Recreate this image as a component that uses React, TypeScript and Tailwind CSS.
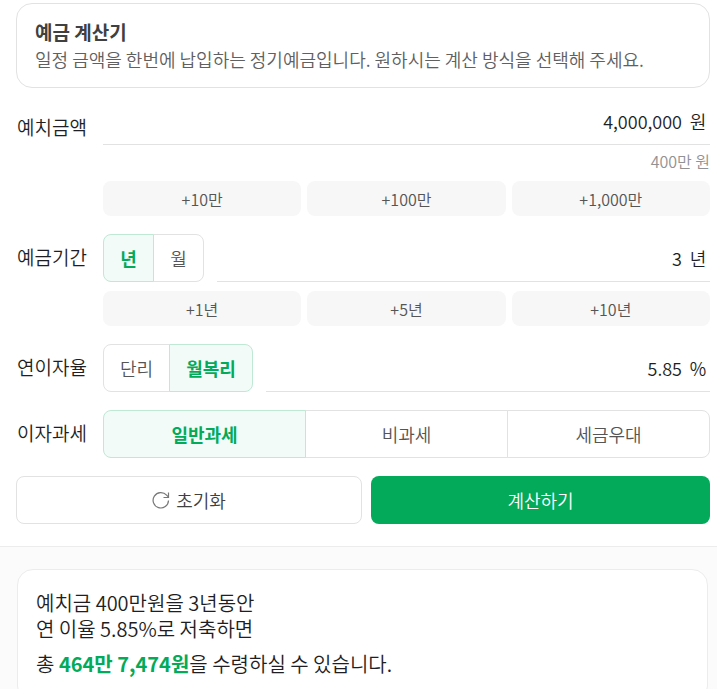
import { useState, type ReactNode } from "react";
import clsx from "clsx";

const ResetIcon = () => (
  <svg
    className="h-[18px] w-[18px] text-[#777]"
    viewBox="0 0 18 18"
    fill="none"
    stroke="currentColor"
    strokeWidth="1.2"
    aria-hidden="true"
  >
    <path d="M16.5 9.5A7.7 7.7 0 1 1 14.6 4.2L16.5 6.2" />
    <path d="M16.5 1.5v5h-5" />
  </svg>
);

type RowProps = {
  id: string;
  label: string;
  group?: boolean;
  tall?: boolean;
  children: ReactNode;
};

const Row = ({ id, label, group, tall, children }: RowProps) => {
  const labelClass = clsx(
    "flex w-[87px] shrink-0 items-center pb-0.5 pl-px text-[19px] text-[#1e1e23]",
    tall ? "h-[62px]" : "h-12",
  );
  return (
    <div className="flex">
      {group ? (
        <span className={labelClass}>{label}</span>
      ) : (
        <label htmlFor={id} className={labelClass}>
          {label}
        </label>
      )}
      <div className="min-w-0 flex-1">{children}</div>
    </div>
  );
};

type FieldProps = {
  id: string;
  unit: string;
  value: string;
  onChange: (value: string) => void;
};

const Field = ({ id, unit, value, onChange }: FieldProps) => (
  <div className="flex h-12 min-w-0 flex-1 items-center gap-1.5 border-b border-[#e2e2e2] pr-0.5 text-lg text-[#1e1e23]">
    <input
      id={id}
      type="text"
      inputMode="decimal"
      className="h-full w-full min-w-0 text-right outline-none"
      value={value}
      onChange={(e) => onChange(e.target.value)}
    />
    <span className="w-5 shrink-0 text-center">{unit}</span>
  </div>
);

type ToggleProps = {
  label: string;
  options: string[];
  value: string;
  wide?: boolean;
  onChange: (value: string) => void;
};

const Toggle = ({ label, options, value, wide, onChange }: ToggleProps) => (
  <div role="group" aria-label={label} className={clsx("flex h-12", wide ? "w-full" : "shrink-0")}>
    {options.map((option) => (
      <button
        key={option}
        type="button"
        aria-pressed={option === value}
        onClick={() => onChange(option)}
        className={clsx(
          "-ml-px min-w-[51px] border px-4 text-lg first:ml-0 first:rounded-l-lg last:rounded-r-lg",
          wide && "flex-1",
          option === value
            ? "z-1 border-[#bfe8d5] bg-[#f2fbf8] font-bold text-[#03aa5a]"
            : "border-[#e2e2e2] bg-white text-[#555]",
        )}
      >
        {option}
      </button>
    ))}
  </div>
);

type QuickAddProps = {
  steps: number[];
  unit: string;
  onAdd: (step: number) => void;
};

const QuickAdd = ({ steps, unit, onAdd }: QuickAddProps) => (
  <div className="grid grid-cols-3 gap-1.5">
    {steps.map((step) => (
      <button
        key={step}
        type="button"
        onClick={() => onAdd(step)}
        className="h-[35px] rounded-lg bg-[#f7f7f7] text-base text-[#555]"
      >
        +{step.toLocaleString("en-US")}
        {unit}
      </button>
    ))}
  </div>
);

const App = () => {
  const [amount, setAmount] = useState(4000000);
  const [period, setPeriod] = useState(3);
  const [rate, setRate] = useState("5.85");
  const [periodUnit, setPeriodUnit] = useState("년");
  const [interest, setInterest] = useState("월복리");
  const [tax, setTax] = useState("일반과세");

  const toNumber = (value: string) => Number(value.replace(/\D/g, ""));

  const reset = () => {
    setAmount(0);
    setPeriod(0);
    setRate("");
  };

  return (
    <main className="min-h-screen bg-[#fbfbfb] font-['Noto_Sans_CJK_KR',sans-serif] font-[350]">
      <form
        className="border-b border-[#ececec] bg-white pt-[3px] pr-[7px] pb-[22px] pl-4"
        onSubmit={(e) => e.preventDefault()}
      >
        <div className="rounded-2xl border border-[#e2e2e2] px-[18px] pt-3.5 pb-[15px]">
          <h1 className="text-[19px] leading-7 font-bold text-[#404040]">예금 계산기</h1>
          <p className="text-lg leading-[26px] text-[#606060]">
            일정 금액을 한번에 납입하는 정기예금입니다. 원하시는 계산 방식을 선택해 주세요.
          </p>
        </div>

        <div className="mt-[9px] flex flex-col gap-[18px]">
          <Row id="amount" label="예치금액" tall>
            <Field
              id="amount"
              unit="원"
              value={amount.toLocaleString("en-US")}
              onChange={(value) => setAmount(toNumber(value))}
            />
            <p className="h-9 text-right text-base leading-8 text-[#929294]">
              {(amount / 10000).toLocaleString("en-US")}만 원
            </p>
            <QuickAdd
              steps={[10, 100, 1000]}
              unit="만"
              onAdd={(step) => setAmount(amount + step * 10000)}
            />
          </Row>

          <Row id="period" label="예금기간">
            <div className="mb-[9px] flex gap-[13px]">
              <Toggle
                label="기간 단위"
                options={["년", "월"]}
                value={periodUnit}
                onChange={setPeriodUnit}
              />
              <Field
                id="period"
                unit={periodUnit}
                value={String(period)}
                onChange={(value) => setPeriod(toNumber(value))}
              />
            </div>
            <QuickAdd steps={[1, 5, 10]} unit="년" onAdd={(step) => setPeriod(period + step)} />
          </Row>

          <Row id="rate" label="연이자율">
            <div className="flex gap-[13px]">
              <Toggle
                label="이자 방식"
                options={["단리", "월복리"]}
                value={interest}
                onChange={setInterest}
              />
              <Field id="rate" unit="%" value={rate} onChange={setRate} />
            </div>
          </Row>

          <Row id="tax" label="이자과세" group>
            <Toggle
              label="이자과세"
              options={["일반과세", "비과세", "세금우대"]}
              value={tax}
              wide
              onChange={setTax}
            />
          </Row>

          <div className="grid h-12 grid-cols-[346fr_339fr] gap-[9px] text-lg">
            <button
              type="button"
              onClick={reset}
              className="flex items-center justify-center gap-1.5 rounded-lg border border-[#e2e2e2] text-[#404040]"
            >
              <ResetIcon />
              초기화
            </button>
            <button type="submit" className="rounded-lg bg-[#03aa5a] text-white">
              계산하기
            </button>
          </div>
        </div>
      </form>

      <section className="pt-[22px] pr-[9px] pl-[17px]">
        <div className="rounded-2xl border border-[#ececec] bg-white px-[18px] pt-5 pb-6 text-xl leading-[26px] text-[#1e1e23]">
          <p>예치금 400만원을 3년동안</p>
          <p>연 이율 5.85%로 저축하면</p>
          <p className="mt-[9px]">
            총 <strong className="font-bold text-[#03aa5a]">464만 7,474원</strong>을 수령하실 수
            있습니다.
          </p>
        </div>
      </section>
    </main>
  );
};

export default App;
